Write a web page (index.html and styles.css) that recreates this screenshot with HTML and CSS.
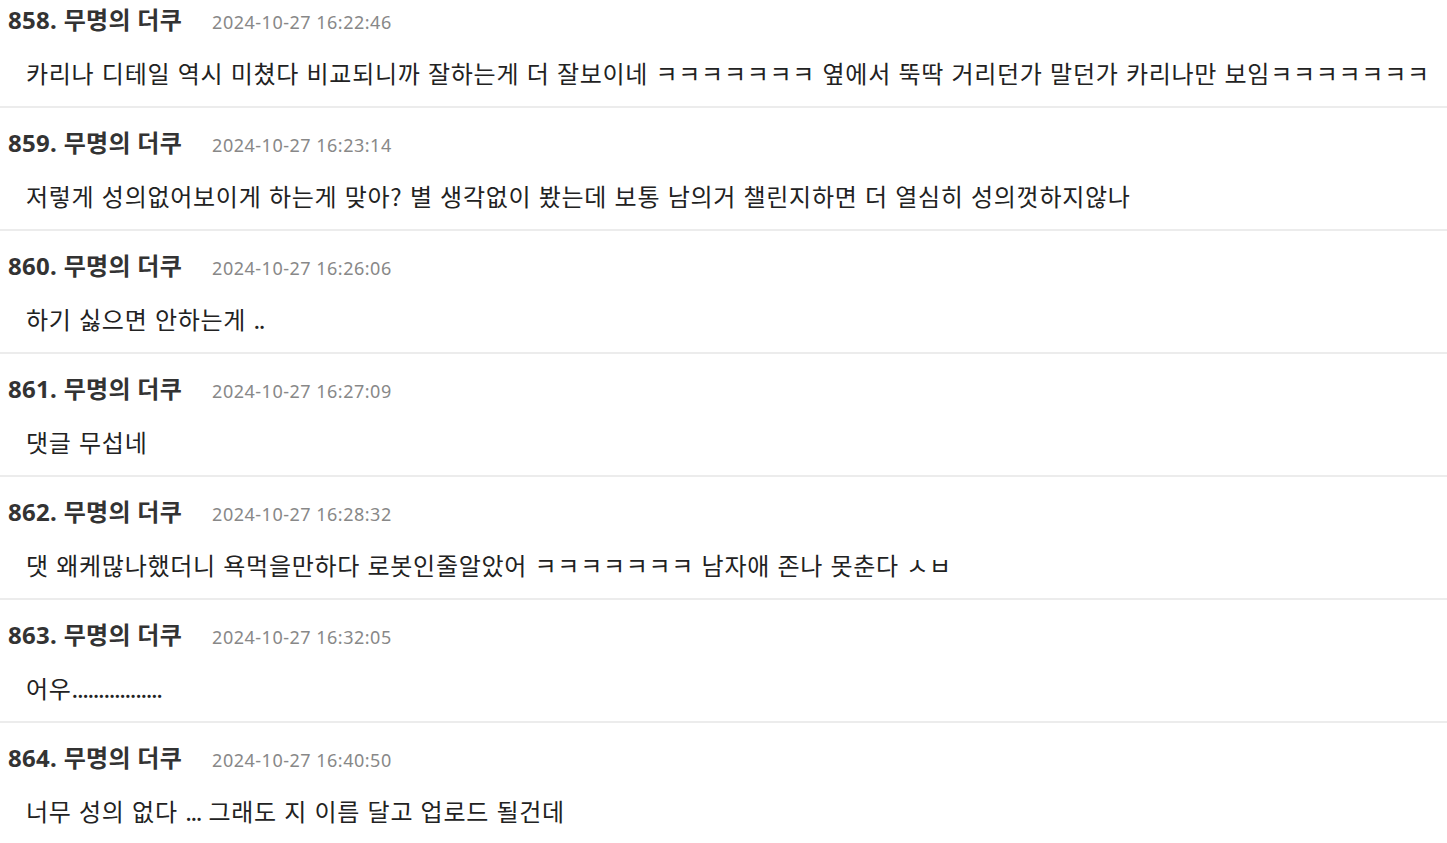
FILE: index.html
```html
<!DOCTYPE html>
<html lang="ko">
<head>
<meta charset="utf-8">
<link rel="stylesheet" href="styles.css">
</head>
<body>
<ul class="comments">
  <li class="comment">
    <div class="head"><span class="name">858. 무명의 더쿠</span><span class="date">2024-10-27 16:22:46</span></div>
    <p class="body">카리나 디테일 역시 미쳤다 비교되니까 잘하는게 더 잘보이네 ㅋㅋㅋㅋㅋㅋㅋ 옆에서 뚝딱 거리던가 말던가 카리나만 보임ㅋㅋㅋㅋㅋㅋㅋ</p>
  </li>
  <li class="comment">
    <div class="head"><span class="name">859. 무명의 더쿠</span><span class="date">2024-10-27 16:23:14</span></div>
    <p class="body">저렇게 성의없어보이게 하는게 맞아? 별 생각없이 봤는데 보통 남의거 챌린지하면 더 열심히 성의껏하지않나</p>
  </li>
  <li class="comment">
    <div class="head"><span class="name">860. 무명의 더쿠</span><span class="date">2024-10-27 16:26:06</span></div>
    <p class="body">하기 싫으면 안하는게 <span class="dots">..</span></p>
  </li>
  <li class="comment">
    <div class="head"><span class="name">861. 무명의 더쿠</span><span class="date">2024-10-27 16:27:09</span></div>
    <p class="body">댓글 무섭네</p>
  </li>
  <li class="comment">
    <div class="head"><span class="name">862. 무명의 더쿠</span><span class="date">2024-10-27 16:28:32</span></div>
    <p class="body">댓 왜케많나했더니 욕먹을만하다 로봇인줄알았어 ㅋㅋㅋㅋㅋㅋㅋ 남자애 존나 못춘다 ㅅㅂ</p>
  </li>
  <li class="comment">
    <div class="head"><span class="name">863. 무명의 더쿠</span><span class="date">2024-10-27 16:32:05</span></div>
    <p class="body">어우<span class="dots">.................</span></p>
  </li>
  <li class="comment">
    <div class="head"><span class="name">864. 무명의 더쿠</span><span class="date">2024-10-27 16:40:50</span></div>
    <p class="body">너무 성의 없다 <span class="dots">...</span> 그래도 지 이름 달고 업로드 될건데</p>
  </li>
</ul>
</body>
</html>
```

FILE: styles.css
```css
html, body {
  margin: 0;
  padding: 0;
  background: #ffffff;
}
body {
  font-family: "Noto Sans CJK KR", "Noto Sans", sans-serif;
  color: #222222;
  overflow: hidden;
}
.comments {
  list-style: none;
  margin: -15px 0 0 0;
  padding: 0;
}
.comment {
  padding: 20px 0 18px 8px;
  border-bottom: 2px solid #ececec;
}
.head {
  display: flex;
  align-items: baseline;
  gap: 30px;
  height: 30px;
  line-height: 30px;
  font-family: "Noto Sans", "Noto Sans CJK KR", sans-serif;
}
.name {
  font-size: 24px;
  font-weight: 700;
  letter-spacing: 0.3px;
  color: #333333;
}
.date {
  font-size: 18px;
  letter-spacing: 0.5px;
  color: #888888;
}
.body {
  margin: 23px 0 0 0;
  padding-left: 18px;
  font-size: 24px;
  letter-spacing: 0.72px;
  line-height: 30px;
  color: #222222;
  white-space: nowrap;
}
.dots {
  letter-spacing: -1.4px;
}
```
